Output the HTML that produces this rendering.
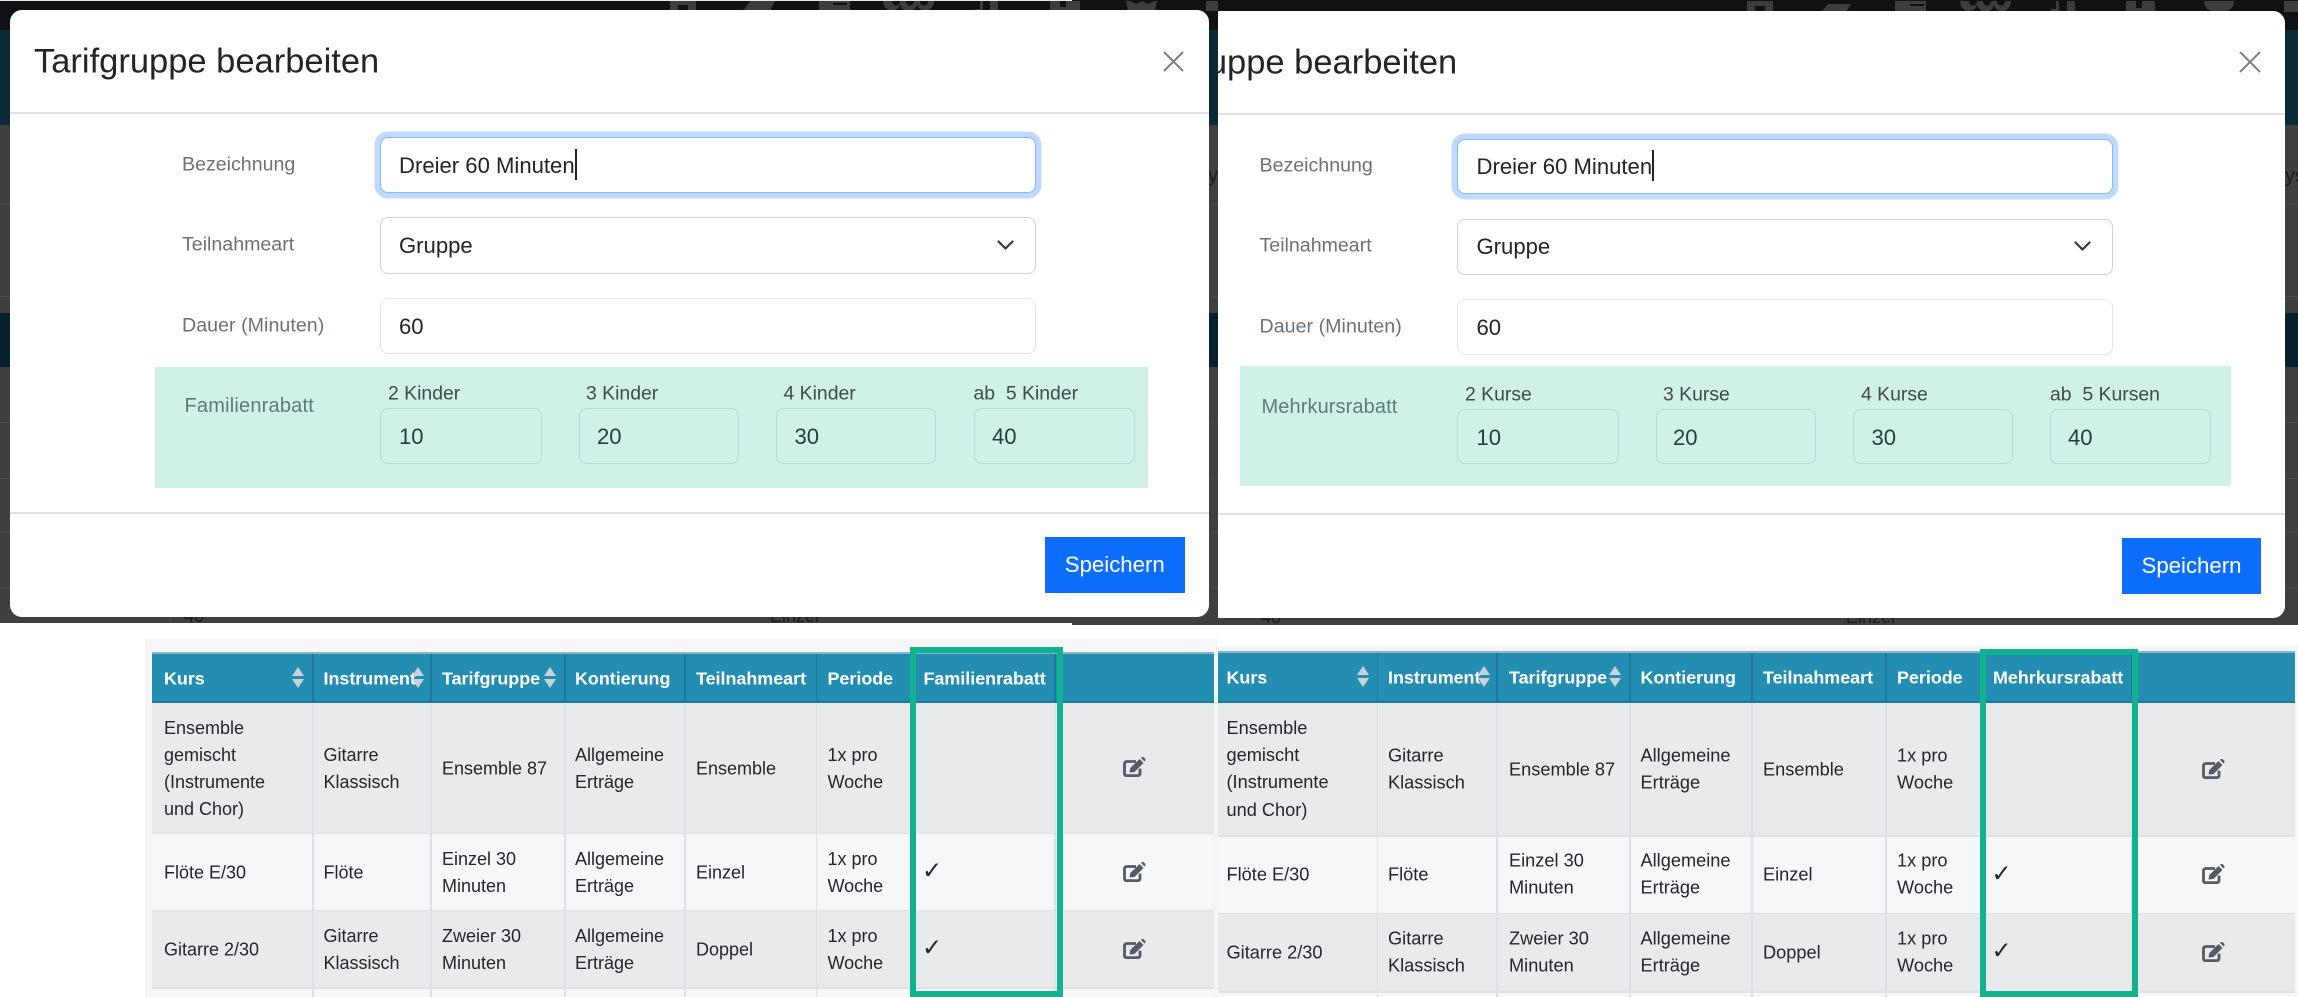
<!DOCTYPE html>
<html lang="de">
<head>
<meta charset="utf-8">
<title>Tarifgruppe bearbeiten</title>
<style>
html,body{margin:0;padding:0;width:2298px;height:997px;overflow:hidden;background:#fff}
body{position:relative;font-family:"Liberation Sans",sans-serif;color:#212529}
div,span,svg{position:absolute;box-sizing:border-box}
.r{display:block}
.t{white-space:nowrap;transform:translateY(-50%);line-height:1.2}
.title{font-size:34.5px;color:#212529;margin-top:1.5px}
.l{font-size:19.6px;color:#6a7178;margin-top:1.3px}
.lg{font-size:20px;color:#5c7d76;letter-spacing:.2px;margin-top:1px}
.v{font-size:22.1px;color:#212529;margin-top:1px}
.vg{font-size:22.1px;color:#22403a;margin-top:.7px}
.cl{font-size:19.4px;color:#3c4d4a}
.inp{background:#fff;border:1.5px solid #e3e6ea;border-radius:8px}
.sel{background:#fff;border:1.5px solid #ced4da;border-radius:8px}
.foc{background:#fff;border:1.5px solid #86b7fe;border-radius:8px;box-shadow:0 0 0 5.5px #c0d9fd}
.gi{border:1.5px solid #b4dcd3;border-radius:8px}
.band{background:#d1f0e8}
.hr{height:1.5px;background:#dee2e6}
.btn{background:#0d6efd;color:#fff;font-size:22.2px;text-align:center;white-space:nowrap}
.th{background:#238db2;border-top:2px solid #87b6c8;border-bottom:2px solid #1b7a9d}
.tv{width:1.5px;background:#1c7a9c}
.a{background:#e9eaec}
.b{background:#f6f7f9}
.cv{width:1.5px;background:#e0e1e4}
.sep{height:1.5px;background:#dfe1e4}
.h{font-size:17.9px;font-weight:bold;color:#fff;white-space:nowrap;transform:translateY(-50%);line-height:1.2;margin-top:.5px}
.c{font-size:18px;line-height:27px;color:#23272b;white-space:nowrap;transform:translateY(-50%)}
.c2{font-size:18.2px;line-height:27.4px;color:#23272b;white-space:nowrap;transform:translateY(-50%)}
.ck{font-size:24px;color:#23272b;font-family:"DejaVu Sans",sans-serif;transform:translateY(-50%);line-height:1.2}
.box{border:6px solid #10b28f}
</style>
</head>
<body>
<!-- dark backdrop -->
<div style="left:0;top:0;width:2298px;height:623px;background:#3f3f3f"></div>
<div style="left:1072px;top:620px;width:1226px;height:5px;background:#3f3f3f"></div>
<div style="left:0;top:0;width:2298px;height:30px;background:#101114"></div>
<div style="left:0;top:0;width:1072px;height:1px;background:#e8e8e8"></div>
<div style="left:0;top:30px;width:2298px;height:95px;background:#0c2a35"></div>
<div style="left:0;top:313px;width:2298px;height:54px;background:#08222c"></div>
<div style="left:0;top:204px;width:2298px;height:1px;background:#4a4a4a"></div>
<div style="left:0;top:296px;width:2298px;height:1px;background:#4a4a4a"></div>
<div style="left:0;top:422px;width:2298px;height:1px;background:#4a4a4a"></div>
<div style="left:0;top:478px;width:2298px;height:1px;background:#4a4a4a"></div>
<div style="left:0;top:532px;width:2298px;height:1px;background:#4a4a4a"></div>
<div style="left:0;top:587px;width:2298px;height:1px;background:#4a4a4a"></div>
<div style="left:170px;top:587px;width:1px;height:36px;background:#4a4a4a"></div>
<div class="t" style="left:1208px;top:176px;font-size:20px;color:#1c1c1c">y</div>
<div class="t" style="left:2285px;top:176px;font-size:20px;color:#1c1c1c">ys</div>
<div class="t" style="left:184px;top:616.5px;font-size:18px;color:#1c1c1c">40</div>
<div class="t" style="left:770px;top:616.5px;font-size:18px;color:#1c1c1c">Einzel</div>
<div class="t" style="left:1261px;top:618px;font-size:18px;color:#1c1c1c">40</div>
<div class="t" style="left:1846px;top:618px;font-size:18px;color:#1c1c1c">Einzel</div>

<!-- top icons -->
<svg style="left:0;top:0" width="2298" height="30" viewBox="0 0 2298 30" fill="#3d3d3d">
<path d="M670 1h26v10h-8V5h-10v6h-8z"/>
<path d="M743 11l7-10h25l-5 10z"/>
<path d="M819 1h31v10h-31z"/><path d="M833 3h14v2h-14z" fill="#101114"/>
<path d="M883 1c0 12 16 12 17 3 1 9 16 9 17 0 1 9 17 9 17-3h-6c0 6-8 6-8 0h-6c0 6-8 6-8 0h-6c0 6-8 6-8 0z"/>
<path d="M975 9h5V1h3v10h-8zM990 1h8v10h-8z"/>
<path d="M1050 1h30v10h-30z"/><path d="M1060 1h6v6h-6z" fill="#101114"/>
<path d="M1126 1h4l6 3 6-3 6 3 6-3h3l-2 10h-27z"/>
<path d="M1206 1h12v10h-12z"/>
<path d="M1747 1h26v11h-8V6h-10v6h-8z"/>
<path d="M1821 12l7-8h23l-5 8z"/>
<path d="M1895 1h31v11h-31z"/><path d="M1910 4h14v2h-14z" fill="#101114"/>
<path d="M1960 1c0 13 16 13 17 3 1 10 16 10 17 0 1 10 17 10 17-3h-6c0 6-8 6-8 0h-6c0 6-8 6-8 0h-6c0 6-8 6-8 0z"/>
<path d="M2051 9h5V1h3v11h-8zM2067 1h8v11h-8z"/>
<path d="M2126 1h29v11h-29z"/><path d="M2136 1h6v7h-6z" fill="#101114"/>
<path d="M2204 1h30c0 8-6 11-15 11s-15-3-15-11z"/>
<path d="M2284 1h14v11h-14z"/>
</svg>

<!-- Modal 1 -->
<div style="left:10px;top:10px;width:1198.5px;height:607px;background:#fff;border-radius:12px"></div>
<div class="t title" style="left:34px;top:60px">Tarifgruppe bearbeiten</div>
<svg style="left:1163px;top:51px" width="21" height="21" viewBox="0 0 21 21"><path d="M1 1l19 19M20 1L1 20" stroke="#808080" stroke-width="2" fill="none"/></svg>
<div class="hr" style="left:10px;top:112px;width:1198.5px"></div>
<div class="t l" style="left:182px;top:164px">Bezeichnung</div>
<div class="foc" style="left:380px;top:137px;width:656px;height:56px"></div>
<div class="t v" style="left:399px;top:165px">Dreier 60 Minuten</div>
<div style="left:575px;top:149px;width:1.5px;height:31px;background:#212529"></div>
<div class="t l" style="left:182px;top:244px">Teilnahmeart</div>
<div class="sel" style="left:380px;top:217px;width:656px;height:56.5px"></div>
<div class="t v" style="left:399px;top:245px">Gruppe</div>
<svg style="left:997px;top:240px" width="17" height="11" viewBox="0 0 17 11"><path d="M1.5 1.5l7 7 7-7" stroke="#343a40" stroke-width="2.2" fill="none" stroke-linecap="round" stroke-linejoin="round"/></svg>
<div class="t l" style="left:182px;top:325px;letter-spacing:.05px">Dauer (Minuten)</div>
<div class="inp" style="left:380px;top:298px;width:656px;height:55.5px"></div>
<div class="t v" style="left:399px;top:326px">60</div>
<div class="band" style="left:155px;top:366.5px;width:993px;height:121.5px"></div>
<div class="t lg" style="left:184.5px;top:405px">Familienrabatt</div>
<div class="t cl" style="left:388px;top:393.5px">2 Kinder</div>
<div class="t cl" style="left:586px;top:393.5px">3 Kinder</div>
<div class="t cl" style="left:783.5px;top:393.5px">4 Kinder</div>
<div class="t cl" style="left:973.5px;top:393.5px;white-space:pre">ab  5 Kinder</div>
<div class="gi" style="left:380px;top:408px;width:161.5px;height:55.5px"></div>
<div class="gi" style="left:578.5px;top:408px;width:160px;height:55.5px"></div>
<div class="gi" style="left:775.5px;top:408px;width:160.5px;height:55.5px"></div>
<div class="gi" style="left:973.5px;top:408px;width:161px;height:55.5px"></div>
<div class="t vg" style="left:399px;top:436.5px">10</div>
<div class="t vg" style="left:597px;top:436.5px">20</div>
<div class="t vg" style="left:794.5px;top:436.5px">30</div>
<div class="t vg" style="left:992px;top:436.5px">40</div>
<div class="hr" style="left:10px;top:512px;width:1198.5px"></div>
<div class="btn" style="left:1045px;top:537px;width:139.5px;height:56px;line-height:56px">Speichern</div>

<!-- Modal 2 (cropped screenshot) -->
<div style="left:1218px;top:11px;width:1067px;height:607px;background:#fff;border-radius:0 12px 12px 0;overflow:hidden">
<div style="left:-1218px;top:-11px;width:2298px;height:997px">
<div class="t title" style="left:1112px;top:61px">Tarifgruppe bearbeiten</div>
<svg style="left:2239px;top:51px" width="22" height="22" viewBox="0 0 22 22"><path d="M1 1l20 20M21 1L1 21" stroke="#808080" stroke-width="2" fill="none"/></svg>
<div class="hr" style="left:1218px;top:113px;width:1067px"></div>
<div class="t l" style="left:1259.5px;top:165px">Bezeichnung</div>
<div class="foc" style="left:1457px;top:138.5px;width:655.5px;height:55.5px"></div>
<div class="t v" style="left:1476.5px;top:166px">Dreier 60 Minuten</div>
<div style="left:1652px;top:150px;width:1.5px;height:31px;background:#212529"></div>
<div class="t l" style="left:1259.5px;top:245px">Teilnahmeart</div>
<div class="sel" style="left:1457px;top:218.5px;width:655.5px;height:56px"></div>
<div class="t v" style="left:1476.5px;top:246px">Gruppe</div>
<svg style="left:2073.5px;top:241px" width="17" height="11" viewBox="0 0 17 11"><path d="M1.5 1.5l7 7 7-7" stroke="#343a40" stroke-width="2.2" fill="none" stroke-linecap="round" stroke-linejoin="round"/></svg>
<div class="t l" style="left:1259.5px;top:326px;letter-spacing:.05px">Dauer (Minuten)</div>
<div class="inp" style="left:1457px;top:299px;width:655.5px;height:55.5px"></div>
<div class="t v" style="left:1476.5px;top:327px">60</div>
<div class="band" style="left:1240px;top:366px;width:991px;height:120px"></div>
<div class="t lg" style="left:1261.5px;top:406px;letter-spacing:.1px">Mehrkursrabatt</div>
<div class="t cl" style="left:1465px;top:394.5px">2 Kurse</div>
<div class="t cl" style="left:1663px;top:394.5px">3 Kurse</div>
<div class="t cl" style="left:1861px;top:394.5px">4 Kurse</div>
<div class="t cl" style="left:2050px;top:394.5px;white-space:pre">ab  5 Kursen</div>
<div class="gi" style="left:1457px;top:409px;width:162px;height:55px"></div>
<div class="gi" style="left:1656px;top:409px;width:159.5px;height:55px"></div>
<div class="gi" style="left:1852.5px;top:409px;width:160.5px;height:55px"></div>
<div class="gi" style="left:2050px;top:409px;width:161px;height:55px"></div>
<div class="t vg" style="left:1476.5px;top:437.5px">10</div>
<div class="t vg" style="left:1673px;top:437.5px">20</div>
<div class="t vg" style="left:1871.5px;top:437.5px">30</div>
<div class="t vg" style="left:2068px;top:437.5px">40</div>
<div class="hr" style="left:1218px;top:513px;width:1067px"></div>
<div class="btn" style="left:2122px;top:538px;width:139px;height:55.5px;line-height:55.5px">Speichern</div>
</div>
</div>

<!-- Left table -->
<div style="left:145px;top:639px;width:1073px;height:358px;background:#f5f6f8"></div>
<div class="th" style="left:152px;top:652px;width:1062px;height:51px"></div>
<div class="a" style="left:152px;top:703px;width:1062px;height:130px"></div>
<div class="b" style="left:152px;top:833px;width:1062px;height:77px"></div>
<div class="a" style="left:152px;top:910px;width:1062px;height:78px"></div>
<div class="b" style="left:152px;top:988px;width:1062px;height:9px"></div>
<div class="sep" style="left:152px;top:832.5px;width:1062px"></div>
<div class="sep" style="left:152px;top:909.5px;width:1062px"></div>
<div class="sep" style="left:152px;top:987px;width:1062px"></div>
<div class="tv" style="left:312px;top:654px;height:48px"></div>
<div class="tv" style="left:430px;top:654px;height:48px"></div>
<div class="tv" style="left:564px;top:654px;height:48px"></div>
<div class="tv" style="left:684px;top:654px;height:48px"></div>
<div class="tv" style="left:815.5px;top:654px;height:48px"></div>
<div class="tv" style="left:1054px;top:654px;height:48px"></div>
<div class="cv" style="left:312px;top:703px;height:294px"></div>
<div class="cv" style="left:430px;top:703px;height:294px"></div>
<div class="cv" style="left:564px;top:703px;height:294px"></div>
<div class="cv" style="left:684px;top:703px;height:294px"></div>
<div class="cv" style="left:815.5px;top:703px;height:294px"></div>
<div class="cv" style="left:1054px;top:703px;height:294px"></div>

<div class="h" style="left:164px;top:678px">Kurs</div>
<div class="h" style="left:323.5px;top:678px">Instrument</div>
<div class="h" style="left:442px;top:678px">Tarifgruppe</div>
<div class="h" style="left:575px;top:678px">Kontierung</div>
<div class="h" style="left:696px;top:678px">Teilnahmeart</div>
<div class="h" style="left:827.5px;top:678px">Periode</div>
<div class="h" style="left:923.5px;top:678px">Familienrabatt</div>
<svg style="left:292px;top:667px" width="12" height="21" viewBox="0 0 12 21" fill="#c8d2d8"><path d="M6 0l6 9H0zM0 12h12l-6 9z"/></svg>
<svg style="left:412px;top:667px" width="12" height="21" viewBox="0 0 12 21" fill="#c8d2d8"><path d="M6 0l6 9H0zM0 12h12l-6 9z"/></svg>
<svg style="left:544px;top:667px" width="12" height="21" viewBox="0 0 12 21" fill="#c8d2d8"><path d="M6 0l6 9H0zM0 12h12l-6 9z"/></svg>

<div class="c" style="left:164px;top:768.5px">Ensemble<br>gemischt<br>(Instrumente<br>und Chor)</div>
<div class="c" style="left:323.5px;top:768.5px">Gitarre<br>Klassisch</div>
<div class="c" style="left:442px;top:768.5px">Ensemble 87</div>
<div class="c" style="left:575px;top:768.5px">Allgemeine<br>Erträge</div>
<div class="c" style="left:696px;top:768.5px">Ensemble</div>
<div class="c" style="left:827.5px;top:768.5px">1x pro<br>Woche</div>
<div class="c" style="left:164px;top:872.5px">Flöte E/30</div>
<div class="c" style="left:323.5px;top:872.5px">Flöte</div>
<div class="c" style="left:442px;top:872.5px">Einzel 30<br>Minuten</div>
<div class="c" style="left:575px;top:872.5px">Allgemeine<br>Erträge</div>
<div class="c" style="left:696px;top:872.5px">Einzel</div>
<div class="c" style="left:827.5px;top:872.5px">1x pro<br>Woche</div>
<div class="ck" style="left:922px;top:871px">✓</div>
<div class="c" style="left:164px;top:949.5px">Gitarre 2/30</div>
<div class="c" style="left:323.5px;top:949.5px">Gitarre<br>Klassisch</div>
<div class="c" style="left:442px;top:949.5px">Zweier 30<br>Minuten</div>
<div class="c" style="left:575px;top:949.5px">Allgemeine<br>Erträge</div>
<div class="c" style="left:696px;top:949.5px">Doppel</div>
<div class="c" style="left:827.5px;top:949.5px">1x pro<br>Woche</div>
<div class="ck" style="left:922px;top:948px">✓</div>

<svg style="left:1123px;top:757px" width="24" height="20" viewBox="0 0 24 20"><path d="M13 4.500H3.800a2.300 2.300 0 0 0-2.300 2.300v10a1.800 1.800 0 0 0 1.800 1.800H15a2 2 0 0 0 2-2v-5" fill="none" stroke="#555b63" stroke-width="2.800"/><path d="M6.500 15.500l.8-4.500L16.500 2l4 4-9 9zM18 .8l1-.8c.6-.3 1.200-.2 1.700.3l1.500 1.500c.5.5.5 1.100.2 1.700l-1 1z" fill="#555b63"/></svg>
<svg style="left:1123px;top:862px" width="24" height="20" viewBox="0 0 24 20"><path d="M13 4.500H3.800a2.300 2.300 0 0 0-2.300 2.300v10a1.800 1.800 0 0 0 1.800 1.800H15a2 2 0 0 0 2-2v-5" fill="none" stroke="#555b63" stroke-width="2.800"/><path d="M6.500 15.500l.8-4.500L16.500 2l4 4-9 9zM18 .8l1-.8c.6-.3 1.200-.2 1.700.3l1.500 1.500c.5.5.5 1.100.2 1.700l-1 1z" fill="#555b63"/></svg>
<svg style="left:1123px;top:939px" width="24" height="20" viewBox="0 0 24 20"><path d="M13 4.500H3.800a2.300 2.300 0 0 0-2.300 2.300v10a1.800 1.800 0 0 0 1.800 1.800H15a2 2 0 0 0 2-2v-5" fill="none" stroke="#555b63" stroke-width="2.800"/><path d="M6.500 15.500l.8-4.500L16.500 2l4 4-9 9zM18 .8l1-.8c.6-.3 1.200-.2 1.700.3l1.500 1.500c.5.5.5 1.100.2 1.700l-1 1z" fill="#555b63"/></svg>
<div class="box" style="left:910px;top:647px;width:153px;height:350px"></div>

<!-- Right table -->
<div style="left:1218px;top:646px;width:1080px;height:351px;background:#f5f6f8"></div>
<div class="th" style="left:1217.5px;top:651px;width:1077.5px;height:52px"></div>
<div class="a" style="left:1217.5px;top:703px;width:1077.5px;height:133px"></div>
<div class="b" style="left:1217.5px;top:836px;width:1077.5px;height:77px"></div>
<div class="a" style="left:1217.5px;top:913px;width:1077.5px;height:79px"></div>
<div class="b" style="left:1217.5px;top:992px;width:1077.5px;height:5px"></div>
<div class="sep" style="left:1217.5px;top:835px;width:1077.5px"></div>
<div class="sep" style="left:1217.5px;top:912.5px;width:1077.5px"></div>
<div class="sep" style="left:1217.5px;top:991px;width:1077.5px"></div>
<div class="tv" style="left:1376.5px;top:653px;height:49px"></div>
<div class="tv" style="left:1496px;top:653px;height:49px"></div>
<div class="tv" style="left:1629px;top:653px;height:49px"></div>
<div class="tv" style="left:1751px;top:653px;height:49px"></div>
<div class="tv" style="left:1885px;top:653px;height:49px"></div>
<div class="tv" style="left:2131px;top:653px;height:49px"></div>
<div class="cv" style="left:1376.5px;top:703px;height:294px"></div>
<div class="cv" style="left:1496px;top:703px;height:294px"></div>
<div class="cv" style="left:1629px;top:703px;height:294px"></div>
<div class="cv" style="left:1751px;top:703px;height:294px"></div>
<div class="cv" style="left:1885px;top:703px;height:294px"></div>
<div class="cv" style="left:2131px;top:703px;height:294px"></div>

<div class="h" style="left:1226.5px;top:677.5px">Kurs</div>
<div class="h" style="left:1388px;top:677.5px">Instrument</div>
<div class="h" style="left:1509px;top:677.5px">Tarifgruppe</div>
<div class="h" style="left:1640.5px;top:677.5px">Kontierung</div>
<div class="h" style="left:1763px;top:677.5px">Teilnahmeart</div>
<div class="h" style="left:1897px;top:677.5px">Periode</div>
<div class="h" style="left:1993px;top:677.5px">Mehrkursrabatt</div>
<svg style="left:1357px;top:666px" width="12" height="21" viewBox="0 0 12 21" fill="#c8d2d8"><path d="M6 0l6 9H0zM0 12h12l-6 9z"/></svg>
<svg style="left:1477.5px;top:666px" width="12" height="21" viewBox="0 0 12 21" fill="#c8d2d8"><path d="M6 0l6 9H0zM0 12h12l-6 9z"/></svg>
<svg style="left:1609px;top:666px" width="12" height="21" viewBox="0 0 12 21" fill="#c8d2d8"><path d="M6 0l6 9H0zM0 12h12l-6 9z"/></svg>

<div class="c2" style="left:1226.5px;top:769.5px">Ensemble<br>gemischt<br>(Instrumente<br>und Chor)</div>
<div class="c2" style="left:1388px;top:769.5px">Gitarre<br>Klassisch</div>
<div class="c2" style="left:1509px;top:769.5px">Ensemble 87</div>
<div class="c2" style="left:1640.5px;top:769.5px">Allgemeine<br>Erträge</div>
<div class="c2" style="left:1763px;top:769.5px">Ensemble</div>
<div class="c2" style="left:1897px;top:769.5px">1x pro<br>Woche</div>
<div class="c2" style="left:1226.5px;top:875px">Flöte E/30</div>
<div class="c2" style="left:1388px;top:875px">Flöte</div>
<div class="c2" style="left:1509px;top:875px">Einzel 30<br>Minuten</div>
<div class="c2" style="left:1640.5px;top:875px">Allgemeine<br>Erträge</div>
<div class="c2" style="left:1763px;top:875px">Einzel</div>
<div class="c2" style="left:1897px;top:875px">1x pro<br>Woche</div>
<div class="ck" style="left:1991.5px;top:874px">✓</div>
<div class="c2" style="left:1226.5px;top:953px">Gitarre 2/30</div>
<div class="c2" style="left:1388px;top:953px">Gitarre<br>Klassisch</div>
<div class="c2" style="left:1509px;top:953px">Zweier 30<br>Minuten</div>
<div class="c2" style="left:1640.5px;top:953px">Allgemeine<br>Erträge</div>
<div class="c2" style="left:1763px;top:953px">Doppel</div>
<div class="c2" style="left:1897px;top:953px">1x pro<br>Woche</div>
<div class="ck" style="left:1991.5px;top:951px">✓</div>

<svg style="left:2202px;top:759px" width="24" height="20" viewBox="0 0 24 20"><path d="M13 4.500H3.800a2.300 2.300 0 0 0-2.300 2.300v10a1.800 1.800 0 0 0 1.800 1.800H15a2 2 0 0 0 2-2v-5" fill="none" stroke="#555b63" stroke-width="2.800"/><path d="M6.500 15.500l.8-4.500L16.500 2l4 4-9 9zM18 .8l1-.8c.6-.3 1.200-.2 1.700.3l1.500 1.500c.5.5.5 1.100.2 1.700l-1 1z" fill="#555b63"/></svg>
<svg style="left:2202px;top:864px" width="24" height="20" viewBox="0 0 24 20"><path d="M13 4.500H3.800a2.300 2.300 0 0 0-2.300 2.300v10a1.800 1.800 0 0 0 1.800 1.800H15a2 2 0 0 0 2-2v-5" fill="none" stroke="#555b63" stroke-width="2.800"/><path d="M6.500 15.500l.8-4.500L16.500 2l4 4-9 9zM18 .8l1-.8c.6-.3 1.200-.2 1.700.3l1.500 1.500c.5.5.5 1.100.2 1.700l-1 1z" fill="#555b63"/></svg>
<svg style="left:2202px;top:942px" width="24" height="20" viewBox="0 0 24 20"><path d="M13 4.500H3.800a2.300 2.300 0 0 0-2.300 2.300v10a1.800 1.800 0 0 0 1.800 1.800H15a2 2 0 0 0 2-2v-5" fill="none" stroke="#555b63" stroke-width="2.800"/><path d="M6.500 15.500l.8-4.500L16.500 2l4 4-9 9zM18 .8l1-.8c.6-.3 1.200-.2 1.700.3l1.500 1.500c.5.5.5 1.100.2 1.700l-1 1z" fill="#555b63"/></svg>
<div class="box" style="left:1980px;top:649px;width:158px;height:348px"></div>
</body>
</html>
